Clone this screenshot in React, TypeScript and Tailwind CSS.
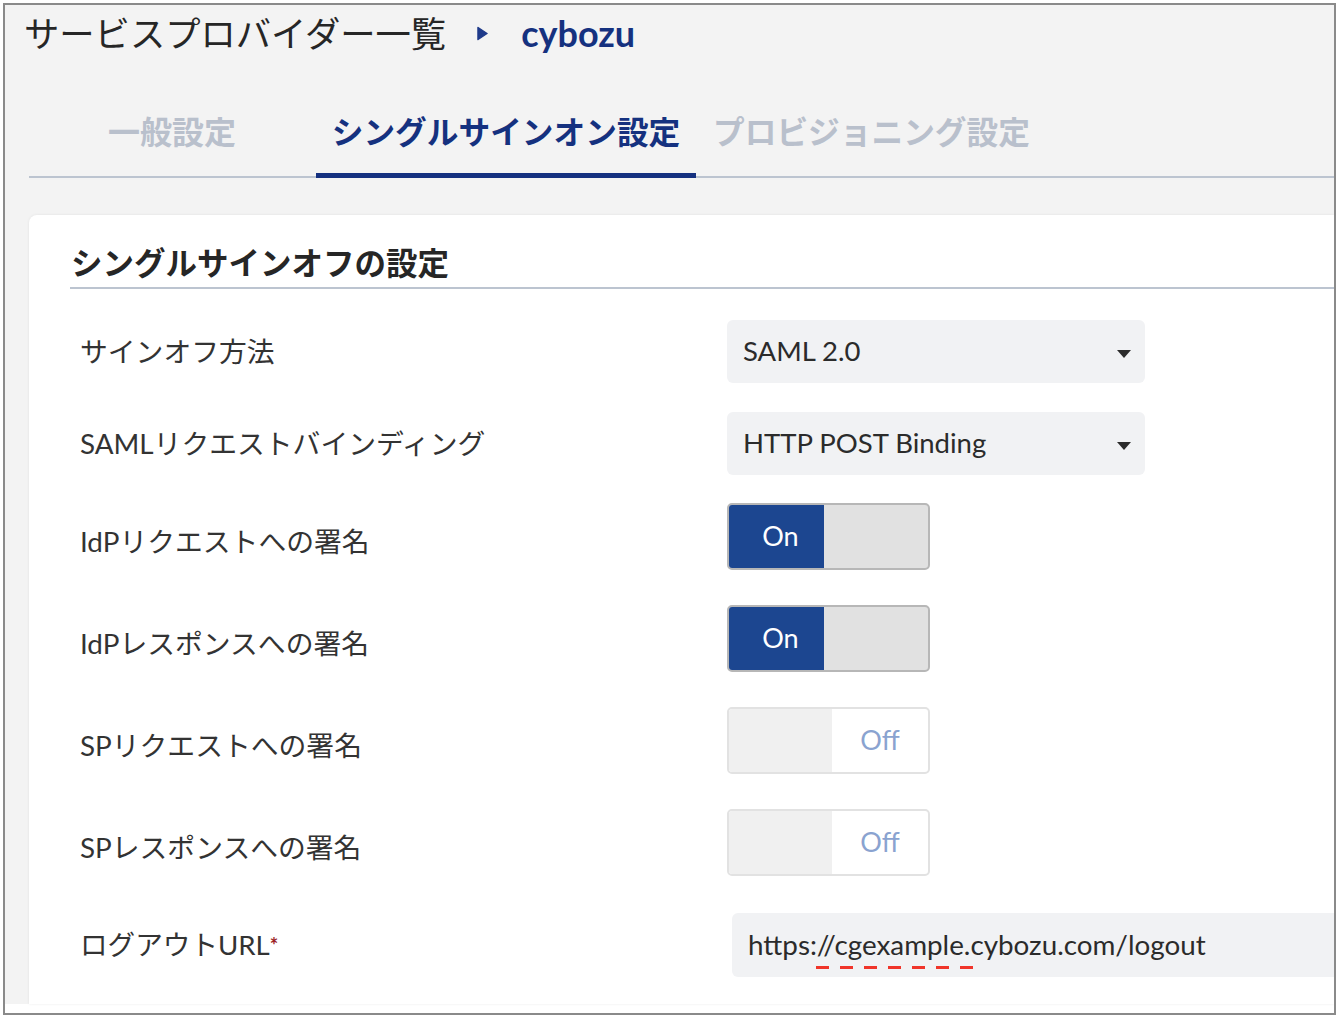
const font = "font-['Lato','Noto_Sans_CJK_JP',sans-serif]"

function Caret() {
  return (
    <svg width="14" height="8" viewBox="0 0 14 8" className="shrink-0">
      <path d="M0 0H14L7 8Z" fill="#2b2b2b" />
    </svg>
  )
}

function SelectBox({ value }: { value: string }) {
  return (
    <div className="flex h-[63px] w-[418px] items-center justify-between rounded-md bg-[#f1f2f4] pl-4 pr-[14px] text-[27.5px] text-[#2b2b2b]">
      <span className="-mt-[2px]">{value}</span>
      <span className="mt-1 flex"><Caret /></span>
    </div>
  )
}

function Toggle({ on }: { on: boolean }) {
  if (on) {
    return (
      <div className="flex h-[67px] w-[203px] overflow-hidden rounded-[5px] border-2 border-[#b7b7b7] bg-[#e1e1e1]">
        <div className="flex w-[95px] items-center justify-center bg-[#1c4690] pl-[8px] text-[27px] text-white">On</div>
      </div>
    )
  }
  return (
    <div className="flex h-[67px] w-[203px] overflow-hidden rounded-[5px] border-2 border-[#e2e2e2] bg-white">
      <div className="w-[103px] bg-[#f0f0f0]" />
      <div className="flex flex-1 items-center justify-center text-[27px] text-[#8aa3d0]">Off</div>
    </div>
  )
}

function Row({ label, height, children, low }: { label: string; height: string; children: React.ReactNode; low?: boolean }) {
  return (
    <div className={`flex items-center ${height}`}>
      <div className={`w-[657px] pl-[10px] text-[27.8px] text-[#333] ${low ? 'pt-[10px]' : ''}`}>
        {label}
      </div>
      {children}
    </div>
  )
}

export default function App() {
  return (
    <div className={`h-[1018px] w-[1338px] overflow-hidden bg-white pl-[3px] pr-[2px] pt-[3px] ${font}`}>
      <div className="flex h-[1012px] flex-col overflow-hidden border-2 border-[#8a8a8a] bg-white">
        <div className="flex h-[999px] flex-col bg-[#f3f3f3]">
          <div className="flex h-[56px] shrink-0 items-center pl-[19px]">
            <span className="pt-[2px] text-[35.3px] text-[#262626]">サービスプロバイダー一覧</span>
            <svg width="11" height="15" viewBox="0 0 11 15" className="ml-[31px] mr-[33px]">
              <path d="M1 1.5L10 7.5L1 13.5Z" fill="#1f3a8a" stroke="#1f3a8a" strokeWidth="1.5" strokeLinejoin="round" />
            </svg>
            <span className="text-[36px] font-bold text-[#15317f]">cybozu</span>
          </div>

          <div className="ml-[24px] mt-[31px] flex h-[86px] shrink-0 border-b-2 border-[#bcc4d0]">
            <div className="flex w-[287px] items-center pb-1 pl-[79px] text-[32px] font-bold text-[#b9c0cc]">一般設定</div>
            <div className="-mb-[2px] flex w-[380px] items-center justify-center border-b-[5px] border-[#14307f] text-[31.7px] font-bold text-[#15317f]">シングルサインオン設定</div>
            <div className="flex items-center pb-[2px] pl-[17px] text-[31.7px] font-bold text-[#b9c0cc]">プロビジョニング設定</div>
          </div>

          <div className="ml-[24px] mt-[37px] flex-1 rounded-tl-lg bg-white pl-[41px] shadow-[0_0_3px_rgba(0,0,0,0.08)]">
            <div className="flex h-[74px] items-end border-b-2 border-[#bcc4d0] pl-[1px] text-[31.5px] font-bold text-[#262626]">シングルサインオフの設定</div>
            <div className="mt-[31px] flex flex-col">
              <Row label="サインオフ方法" height="h-[63px]"><SelectBox value="SAML 2.0" /></Row>
              <Row label="SAMLリクエストバインディング" height="h-[63px] mt-[29px]"><SelectBox value="HTTP POST Binding" /></Row>
              <Row low label="IdPリクエストへの署名" height="h-[67px] mt-[28px]"><Toggle on /></Row>
              <Row low label="IdPレスポンスへの署名" height="h-[67px] mt-[35px]"><Toggle on /></Row>
              <Row low label="SPリクエストへの署名" height="h-[67px] mt-[35px]"><Toggle on={false} /></Row>
              <Row low label="SPレスポンスへの署名" height="h-[67px] mt-[35px]"><Toggle on={false} /></Row>
              <div className="mt-[37px] flex h-[64px] items-center">
                <div className="w-[662px] pl-[10px] text-[27.6px] text-[#333]">
                  ログアウトURL<span className="align-[2px] text-[20px] font-bold leading-none text-[#9b2226]">*</span>
                </div>
                <div className="relative flex h-[64px] flex-1 items-center rounded-l-md bg-[#f1f2f4] pl-4 text-[27.8px] text-[#2b2b2b]">
                  https://cgexample.cybozu.com/logout
                  <div className="absolute bottom-[8px] left-[84px] flex gap-[11px]">
                    {[0, 1, 2, 3, 4, 5, 6].map((i) => (
                      <span key={i} className="h-[3px] w-[13px] bg-[#f0352a]" />
                    ))}
                  </div>
                </div>
              </div>
            </div>
          </div>
        </div>
      </div>
    </div>
  )
}
